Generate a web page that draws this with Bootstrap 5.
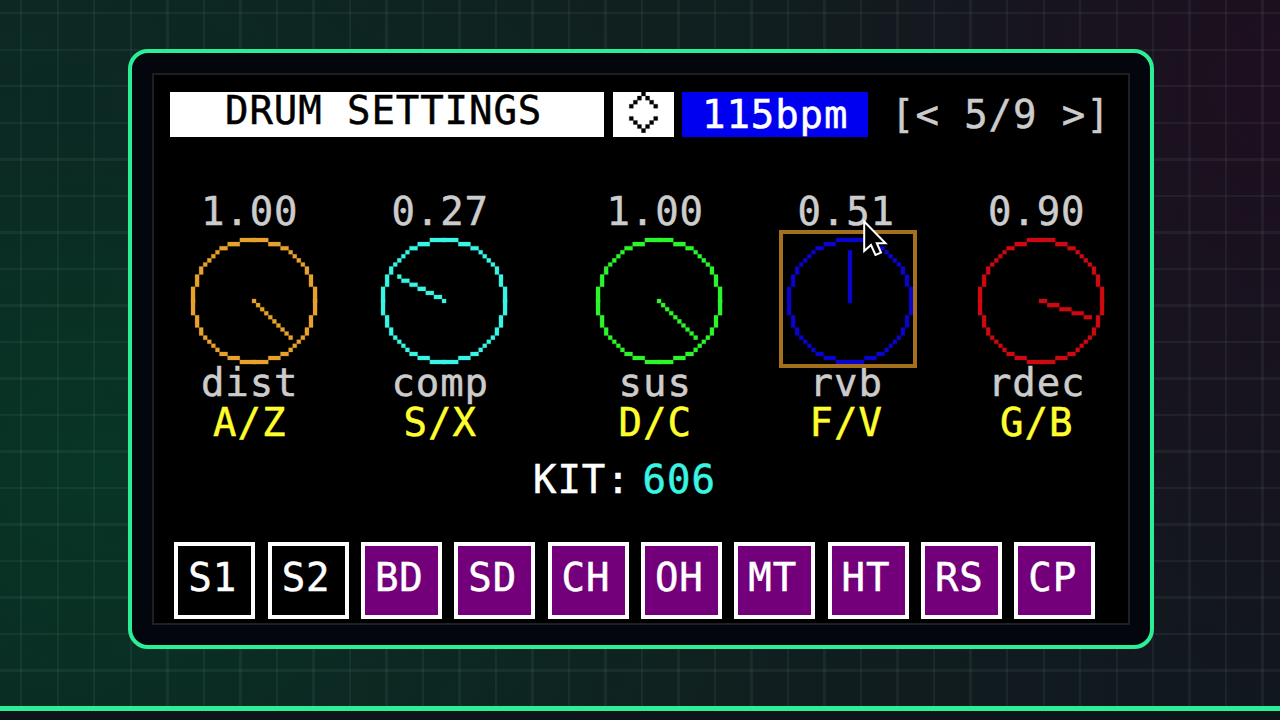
<!DOCTYPE html>
<html lang="en">
<head>
<meta charset="utf-8">
<meta name="viewport" content="width=device-width, initial-scale=1">
<title>Drum Settings</title>
<link href="https://cdn.jsdelivr.net/npm/bootstrap@5.3.0/dist/css/bootstrap.min.css" rel="stylesheet">
<style>
  body {
    height: 720px; overflow: hidden; margin: 0;
    font-family: "DejaVu Sans Mono", monospace; font-size: 39px; line-height: 40px;
    letter-spacing: .92px; color: #ccc;
    -webkit-text-stroke: .5px currentColor;
    background: #0d141a;
  }
  .stage {
    height: 711px; padding: 49px 126px 0 128px; border-bottom: 5px solid #2bef97;
    background:
      repeating-linear-gradient(90deg, rgba(150,190,180,.075) 0 2px, transparent 2px 36.5px) -16px 0 / 1400px 100%,
      repeating-linear-gradient(180deg, rgba(150,190,180,.075) 0 2px, transparent 2px 36.5px) 0 -24px / 100% 800px,
      radial-gradient(ellipse 720px 620px at 8% 66%, rgba(6,58,38,.8), rgba(8,48,36,.45) 50%, transparent),
      radial-gradient(ellipse 480px 620px at 98% 12%, rgba(34,12,31,.75), transparent),
      linear-gradient(90deg, #0d2622, #10201f 50%, #11171f);
  }
  .device { height: 600px; border: 4px solid #2bef97; border-radius: 20px; background: #04060d; padding: 20px; }
  .lcd { height: 552px; width: 978px; border: 2px solid #1d1f24; background: #000; padding: 17px 0 0 16px; white-space: nowrap; }
  .title-bar, .stepper { background: #fff; height: 44.5px; }
  .title-bar { width: 434px; color: #000; padding: 0 0 0 55px; line-height: 37px; margin-right: 8.5px; }
  .stepper { width: 61px; margin-right: 8.5px; }
  .tempo { width: 186px; height: 44.5px; background: #0000f0; color: #fff; padding-left: 20px; line-height: 45px; }
  .pager { line-height: 45px; padding-left: 23px; }
  svg { display: block; fill: currentColor; stroke: currentColor; stroke-width: .06; }
  .knobs { margin: 55px 0 0 20.7px; }
  .knob { width: 126px; }
  .knob .cap { height: 40px; width: 118px; display: flex; justify-content: center; }
  .knob .val { height: 45.7px; }
  .knob svg { width: 126.1px; height: 126.1px; }
  .knob .lbl { margin-top: -.5px; }
  .keys { color: #ffff2e; }
  .focus-box { position: absolute; left: -8px; top: 38.3px; width: 138px; height: 137.5px; border: 4px solid #a5701d; }
  .knob .pointer { position: absolute; left: 74px; top: 26px; width: 28px; height: 40px; }
  .kit { margin: 17px 0 0 363px; color: #fff; }
  .kit-name { margin-left: 12px; color: #38f5e4; }
  .pads { margin: 41.5px 0 0 4.3px; gap: 12.33px; }
  .pad { width: 81px; height: 77.2px; border: 4px solid #fff; color: #fff; padding: 0 0 0 10px; line-height: 63px; background: #000; }
  .pad-drum { background: #73007a; }
</style>
</head>
<body>
<svg width="0" height="0" class="position-absolute">
  <defs>
    <path id="quarter" d="M12 0h4v1h-4zM9 1h3v1h-3zM7 2h2v1h-2zM6 3h1v1h-1zM5 4h1v1h-1zM4 5h1v1h-1zM3 6h1v1h-1zM2 7h1v2h-1zM1 9h1v3h-1zM0 12h1v4h-1z"/>
    <g id="ring">
      <use href="#quarter"/>
      <use href="#quarter" transform="translate(31 0) scale(-1 1)"/>
      <use href="#quarter" transform="translate(0 31) scale(1 -1)"/>
      <use href="#quarter" transform="translate(31 31) scale(-1 -1)"/>
    </g>
    <path id="hand-max" d="M15 15h1v1h-1zM16 16h1v1h-1zM17 17h1v1h-1zM18 18h1v1h-1zM19 19h1v1h-1zM20 20h1v1h-1zM21 21h1v1h-1zM22 22h1v1h-1zM23 23h1v1h-1zM24 24h1v1h-1z"/>
  </defs>
</svg>
<main class="stage">
  <div class="device">
    <div class="lcd">
      <header class="d-flex">
        <div class="title-bar">DRUM SETTINGS</div>
        <div class="stepper"><svg viewBox="0 0 15 11" width="61" height="44.7" color="#000"><path d="M7 0h1v1h-1zM6 1h1v1h-1zM8 1h1v1h-1zM5 2h1v1h-1zM9 2h1v1h-1zM4 3h1v1h-1zM10 3h1v1h-1zM4 6h1v1h-1zM10 6h1v1h-1zM5 7h1v1h-1zM9 7h1v1h-1zM6 8h1v1h-1zM8 8h1v1h-1zM7 9h1v1h-1z"/></svg></div>
        <div class="tempo">115bpm</div>
        <div class="pager">[&lt; 5/9 &gt;]</div>
      </header>
      <section class="knobs d-flex">
        <div class="knob" style="margin-right:64.5px">
          <div class="cap val">1.00</div>
          <svg viewBox="0 0 31 31" overflow="visible" color="#e8a22c"><use href="#ring"/><use href="#hand-max"/></svg>
          <div class="cap lbl">dist</div><div class="cap keys">A/Z</div>
        </div>
        <div class="knob" style="margin-right:89px">
          <div class="cap val">0.27</div>
          <svg viewBox="0 0 31 31" overflow="visible" color="#38f5e4"><use href="#ring"/><path d="M4 9h1v1h-1zM5 10h2v1h-2zM7 11h2v1h-2zM9 12h2v1h-2zM11 13h2v1h-2zM13 14h2v1h-2zM15 15h1v1h-1z"/></svg>
          <div class="cap lbl">comp</div><div class="cap keys">S/X</div>
        </div>
        <div class="knob" style="margin-right:65px">
          <div class="cap val">1.00</div>
          <svg viewBox="0 0 31 31" overflow="visible" color="#2cf52c"><use href="#ring"/><use href="#hand-max"/></svg>
          <div class="cap lbl">sus</div><div class="cap keys">D/C</div>
        </div>
        <div class="knob position-relative" style="margin-right:64.5px">
          <div class="cap val">0.51</div>
          <svg viewBox="0 0 31 31" overflow="visible" color="#0a04cc"><use href="#ring"/><path d="M15 3h1v13h-1z"/></svg>
          <div class="cap lbl">rvb</div><div class="cap keys">F/V</div>
          <div class="focus-box"></div>
          <svg class="pointer" viewBox="0 0 28 40"><path d="M3.2 3.5V33L10 27L14.500 37L20 34.600L15.800 25.200H24.500Z" fill="#000" stroke="#fff" stroke-width="2"/></svg>
        </div>
        <div class="knob">
          <div class="cap val">0.90</div>
          <svg viewBox="0 0 31 31" overflow="visible" color="#cc0a10"><use href="#ring"/><path d="M15 15h2v1h-2zM17 16h3v1h-3zM20 17h3v1h-3zM23 18h3v1h-3zM26 19h2v1h-2z"/></svg>
          <div class="cap lbl">rdec</div><div class="cap keys">G/B</div>
        </div>
      </section>
      <div class="kit d-flex"><span>KIT:</span><span class="kit-name">606</span></div>
      <nav class="pads d-flex">
        <div class="pad">S1</div><div class="pad">S2</div>
        <div class="pad pad-drum">BD</div><div class="pad pad-drum">SD</div>
        <div class="pad pad-drum">CH</div><div class="pad pad-drum">OH</div>
        <div class="pad pad-drum">MT</div><div class="pad pad-drum">HT</div>
        <div class="pad pad-drum">RS</div><div class="pad pad-drum">CP</div>
      </nav>
    </div>
  </div>
</main>
<script src="https://cdn.jsdelivr.net/npm/bootstrap@5.3.0/dist/js/bootstrap.bundle.min.js"></script>
</body>
</html>
